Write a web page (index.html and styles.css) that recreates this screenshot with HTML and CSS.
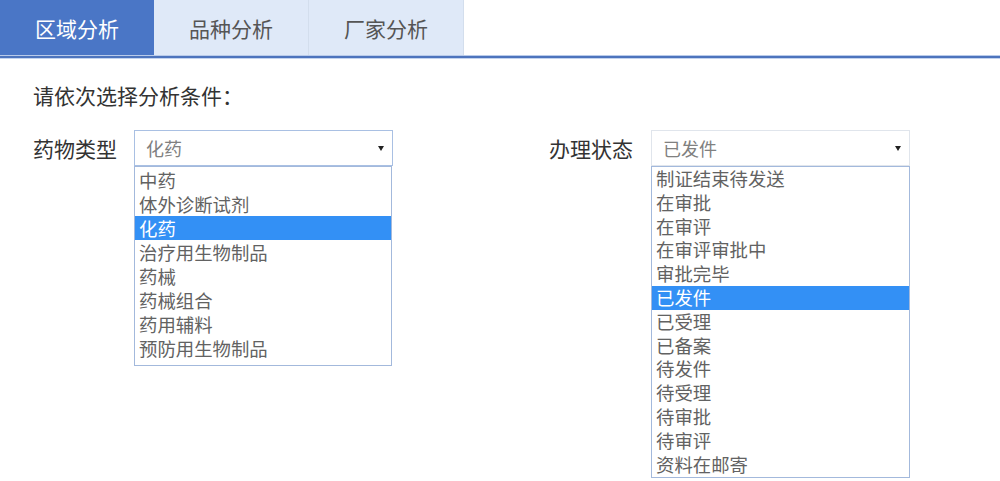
FILE: index.html
```html
<!DOCTYPE html>
<html lang="zh-CN">
<head>
<meta charset="utf-8">
<link rel="stylesheet" href="styles.css">
</head>
<body>
<div class="tabbar">
  <div class="tab active">区域分析</div>
  <div class="tab">品种分析</div>
  <div class="tab">厂家分析</div>
</div>
<div class="rule"></div>
<div class="content">
  <div class="heading">请依次选择分析条件：</div>
  <div class="filters">
    <div class="group group-left">
      <div class="label">药物类型</div>
      <div class="select-wrap">
        <div class="select focus"><span>化药</span><i class="arrow"></i></div>
        <ul class="options opts-left">
          <li>中药</li>
          <li>体外诊断试剂</li>
          <li class="sel">化药</li>
          <li>治疗用生物制品</li>
          <li>药械</li>
          <li>药械组合</li>
          <li>药用辅料</li>
          <li>预防用生物制品</li>
        </ul>
      </div>
    </div>
    <div class="group group-right">
      <div class="label">办理状态</div>
      <div class="select-wrap">
        <div class="select"><span>已发件</span><i class="arrow"></i></div>
        <ul class="options opts-right">
          <li>制证结束待发送</li>
          <li>在审批</li>
          <li>在审评</li>
          <li>在审评审批中</li>
          <li>审批完毕</li>
          <li class="sel">已发件</li>
          <li>已受理</li>
          <li>已备案</li>
          <li>待发件</li>
          <li>待受理</li>
          <li>待审批</li>
          <li>待审评</li>
          <li>资料在邮寄</li>
        </ul>
      </div>
    </div>
  </div>
</div>
</body>
</html>
```

FILE: styles.css
```css
* { box-sizing: border-box; }
html, body {
  margin: 0;
  padding: 0;
  background: #ffffff;
  font-family: "Noto Sans CJK SC", "Noto Sans", sans-serif;
}
.tabbar {
  display: flex;
  height: 55px;
}
.tab {
  width: 155px;
  height: 55px;
  display: flex;
  align-items: center;
  justify-content: center;
  font-size: 21px;
  color: #555555;
  background: #dfe9f8;
  border-right: 1px solid #d3deed;
}
.tab.active {
  width: 154px;
  background: #4a76c6;
  color: #ffffff;
  border-right: none;
}
.rule {
  height: 4px;
  background: linear-gradient(#b9cbea 0, #b9cbea 1px, #4d74bd 1px, #4d74bd 3px, #c3d3ee 3px);
}
.content {
  padding: 21px 0 0 33px;
}
.heading {
  font-size: 21px;
  line-height: 30px;
  color: #333333;
}
.filters {
  display: flex;
  gap: 156px;
  margin-top: 20px;
}
.group {
  display: flex;
  align-items: flex-start;
}
.label {
  font-size: 21px;
  line-height: 36px;
  color: #333333;
  width: 101px;
}
.group-right .label { width: 102px; }
.select-wrap {
  display: flex;
  flex-direction: column;
  width: 259px;
}
.select {
  height: 36px;
  border: 1px solid #e0e5ec;
  display: flex;
  align-items: center;
  justify-content: space-between;
  padding: 0 8px 0 11px;
  font-size: 18px;
  color: #808080;
}
.select.focus { border-color: #a9c0e3; }
.arrow {
  width: 0;
  height: 0;
  border-left: 3px solid transparent;
  border-right: 3px solid transparent;
  border-top: 5px solid #222222;
}
.options {
  width: 259px;
  margin: 0;
  padding: 1px 0 5px;
  list-style: none;
  background: #ffffff;
  border: 1px solid #a3b9dc;
  font-size: 18.4px;
  color: #626262;
}
.opts-left { width: 258px; }
.options li {
  height: 24px;
  line-height: 24px;
  padding-left: 4px;
  white-space: nowrap;
}
.opts-right { padding: 0 0 1px; }
.opts-right li { height: 23.8px; line-height: 23.8px; }
.options li.sel {
  background: #3390f5;
  color: #ffffff;
}
```
